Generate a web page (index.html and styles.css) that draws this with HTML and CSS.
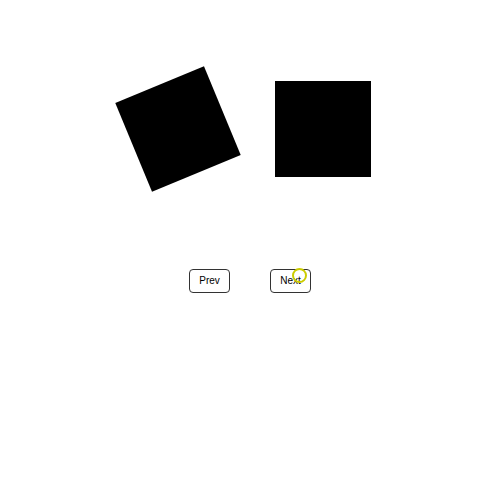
FILE: index.html
```html
<!DOCTYPE html>
<html>
<head>
<meta charset="utf-8">
<link rel="stylesheet" href="styles.css">
</head>
<body>
<div class="page">
  <div class="stage">
    <div class="square tilted"></div>
    <div class="square"></div>
  </div>
  <div class="controls">
    <button class="btn">Prev</button>
    <button class="btn">Next</button>
  </div>
  <div class="cursor"></div>
</div>
</body>
</html>
```
FILE: styles.css
```css
html, body {
  margin: 0;
  padding: 0;
  background: #fff;
}
.page {
  position: relative;
  width: 500px;
  height: 500px;
  display: flex;
  flex-direction: column;
  align-items: center;
}
.stage {
  margin-top: 80.5px;
  display: flex;
  gap: 49px;
}
.square {
  width: 96px;
  height: 96px;
  background: #000;
}
.tilted {
  transform: rotate(-22.5deg);
}
.controls {
  margin-top: 92px;
  display: flex;
  gap: 40px;
}
.btn {
  font-family: "Liberation Sans", Arial, sans-serif;
  font-size: 10px;
  line-height: 12px;
  color: #000;
  background: #fff;
  border: 1px solid #333;
  border-radius: 4px;
  padding: 5px 9px;
  width: 41px;
  height: 24px;
}
.cursor {
  position: absolute;
  left: 292px;
  top: 268px;
  width: 11px;
  height: 11px;
  border: 2px solid #cccc00;
  border-radius: 50%;
}
```
